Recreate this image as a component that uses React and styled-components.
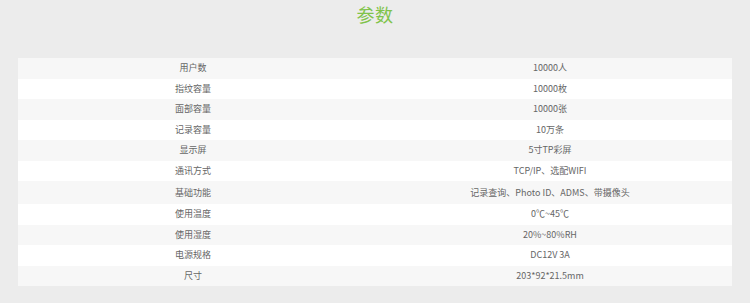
import React from 'react';
import styled, { createGlobalStyle } from 'styled-components';

const GlobalStyle = createGlobalStyle`
  html, body {
    margin: 0;
    padding: 0;
    background: #ececec;
  }
  body {
    font-family: "Noto Sans CJK SC", "Noto Sans", sans-serif;
  }
`;

const Page = styled.div`
  width: 750px;
  height: 303px;
  overflow: hidden;
  background: #ececec;
  display: flex;
  flex-direction: column;
  align-items: center;
`;

const Title = styled.h2`
  margin: 0;
  padding-top: 2px;
  height: 58px;
  box-sizing: border-box;
  font-size: 18px;
  line-height: 24px;
  font-weight: 400;
  color: #80c34a;
  letter-spacing: 0.5px;
`;

const Table = styled.div`
  width: 714px;
  display: flex;
  flex-direction: column;
`;

const Row = styled.div`
  display: grid;
  grid-template-columns: 350px 1fr;
  height: ${({ tall }) => (tall ? '23px' : '20.5px')};
  align-items: center;
  background: ${({ striped }) => (striped ? '#f7f7f7' : '#ffffff')};
`;

const Cell = styled.div`
  text-align: center;
  font-size: 9px;
  line-height: 12px;
  color: #666666;
  white-space: nowrap;
`;

const specs = [
  ['用户数', '10000人'],
  ['指纹容量', '10000枚'],
  ['面部容量', '10000张'],
  ['记录容量', '10万条'],
  ['显示屏', '5寸TP彩屏'],
  ['通讯方式', 'TCP/IP、选配WIFI'],
  ['基础功能', '记录查询、Photo ID、ADMS、带摄像头', true],
  ['使用温度', '0℃~45℃'],
  ['使用湿度', '20%~80%RH'],
  ['电源规格', 'DC12V 3A'],
  ['尺寸', '203*92*21.5mm'],
];

const App = () => (
  <>
    <GlobalStyle />
    <Page>
      <Title>参数</Title>
      <Table>
        {specs.map(([label, value, tall], i) => (
          <Row key={label} striped={i % 2 === 0} tall={tall}>
            <Cell>{label}</Cell>
            <Cell>{value}</Cell>
          </Row>
        ))}
      </Table>
    </Page>
  </>
);

export default App;
